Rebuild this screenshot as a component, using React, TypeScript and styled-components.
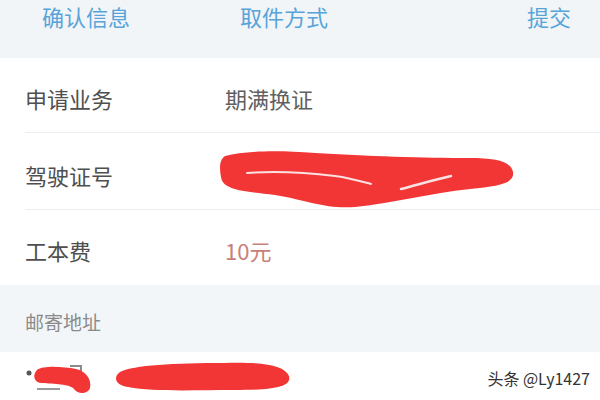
import styled, { createGlobalStyle } from 'styled-components'

const GlobalStyle = createGlobalStyle`
	html, body {
		margin: 0;
		padding: 0;
		background: #ffffff;
	}
	body {
		font-family: 'Noto Sans CJK SC', 'Noto Sans', 'Liberation Sans', sans-serif;
	}
`

type InfoItem = {
	label: string
	value?: string
	tone?: 'plain' | 'price'
	masked?: boolean
	height: number
}

const tabs = [
	{ key: 'confirm', text: '确认信息', offset: 42 },
	{ key: 'pickup', text: '取件方式', offset: 110 },
	{ key: 'submit', text: '提交', offset: 199 }
]

const infoItems: InfoItem[] = [
	{ label: '申请业务', value: '期满换证', tone: 'plain', height: 75 },
	{ label: '驾驶证号', masked: true, height: 77 },
	{ label: '工本费', value: '10元', tone: 'price', height: 75 }
]

// hand-drawn marker that hides the licence number
const RedactLong = () => (
	<svg width='305' height='68' viewBox='0 0 305 68'>
		<path
			d='M10 11 C 30 6, 60 5, 100 8 C 150 11, 210 13, 255 13 C 280 13, 296 16, 298 27 C 300 38, 285 41, 255 44 C 215 48, 180 58, 140 62 C 110 64, 95 56, 60 50 C 30 46, 8 46, 6 32 C 4 22, 5 14, 10 11 Z'
			fill='#f23636'
		/>
		<path
			d='M32 28 C 60 26, 95 28, 120 31 C 135 33, 145 36, 156 39'
			stroke='#fbe1e1'
			strokeWidth='2'
			fill='none'
			strokeLinecap='round'
		/>
		<path
			d='M186 44 C 202 40, 218 35, 236 31'
			stroke='#fbe1e1'
			strokeWidth='2.5'
			fill='none'
			strokeLinecap='round'
		/>
	</svg>
)

const RedactAddress = () => (
	<svg width='300' height='40' viewBox='0 0 300 40'>
		<circle cx='5' cy='11' r='2.5' fill='#555' />
		<path d='M13 27 L 36 27' stroke='#9a9a9a' strokeWidth='2' />
		<path d='M46 4 L 57 4 L 57 16' stroke='#8a8a8a' strokeWidth='2' fill='none' />
		<path
			d='M13 8 C 20 3, 40 5, 52 7 C 62 9, 68 18, 66 26 C 64 32, 54 33, 50 27 C 46 22, 30 22, 18 21 C 10 21, 8 13, 13 8 Z'
			fill='#f23636'
		/>
		<path
			d='M96 10 C 110 3, 150 1, 200 1 C 240 0, 260 3, 265 14 C 268 25, 250 28, 210 28 C 170 28, 130 30, 104 25 C 91 23, 89 15, 96 10 Z'
			fill='#f23636'
		/>
	</svg>
)

export default function App() {
	return (
		<Screen>
			<GlobalStyle />
			<TabBar>
				{tabs.map(tab => (
					<Tab key={tab.key} $offset={tab.offset}>
						{tab.text}
					</Tab>
				))}
			</TabBar>
			<InfoList>
				{infoItems.map((item, index) => (
					<InfoRow key={item.label} $height={item.height} $divider={index < infoItems.length - 1}>
						<Label>{item.label}</Label>
						{item.masked ? (
							<MaskWrap>
								<RedactLong />
							</MaskWrap>
						) : (
							<Value $tone={item.tone}>{item.value}</Value>
						)}
					</InfoRow>
				))}
			</InfoList>
			<SectionHeader>邮寄地址</SectionHeader>
			<AddressRow>
				<RedactAddress />
			</AddressRow>
			<Watermark>头条 @Ly1427</Watermark>
		</Screen>
	)
}

const Screen = styled.div`
	position: relative;
	width: 600px;
	height: 400px;
	overflow: hidden;
	background: #ffffff;
`

const TabBar = styled.div`
	display: flex;
	align-items: flex-start;
	height: 58px;
	padding-top: 2px;
	box-sizing: border-box;
	background: #f1f5f8;
`

const Tab = styled.div<{ $offset: number }>`
	margin-left: ${p => p.$offset}px;
	font-size: 22px;
	line-height: 28px;
	color: #58a4d9;
`

const InfoList = styled.div`
	display: flex;
	flex-direction: column;
	background: #ffffff;
`

const InfoRow = styled.div<{ $height: number; $divider: boolean }>`
	position: relative;
	display: grid;
	grid-template-columns: 200px 1fr;
	align-items: center;
	height: ${p => p.$height}px;
	padding: 4px 0 0 25px;
	box-sizing: border-box;

	&::after {
		content: '';
		display: ${p => (p.$divider ? 'block' : 'none')};
		position: absolute;
		left: 25px;
		right: 0;
		bottom: 0;
		height: 1px;
		background: #ebeef0;
	}
`

const Label = styled.div`
	font-size: 22px;
	line-height: 30px;
	color: #4f4f4f;
`

const Value = styled.div<{ $tone?: 'plain' | 'price' }>`
	font-size: 22px;
	line-height: 30px;
	color: ${p => (p.$tone === 'price' ? '#c8807a' : '#606060')};
`

const MaskWrap = styled.div`
	display: flex;
	align-self: start;
	margin: 8px 0 0 -10px;
`

const SectionHeader = styled.div`
	display: flex;
	align-items: center;
	height: 67px;
	padding: 6px 0 0 25px;
	box-sizing: border-box;
	background: #f3f6f8;
	font-size: 19px;
	color: #8a8a8a;
`

const AddressRow = styled.div`
	display: flex;
	align-items: flex-start;
	height: 60px;
	padding: 10px 0 0 24px;
	box-sizing: border-box;
	background: #ffffff;
`

const Watermark = styled.div`
	position: absolute;
	right: 10px;
	bottom: 10px;
	font-family: 'Noto Sans CJK SC', 'Liberation Sans', sans-serif;
	font-size: 16px;
	color: #333333;
	text-shadow: 0 0 2px #ffffff, 0 0 2px #ffffff;
`
